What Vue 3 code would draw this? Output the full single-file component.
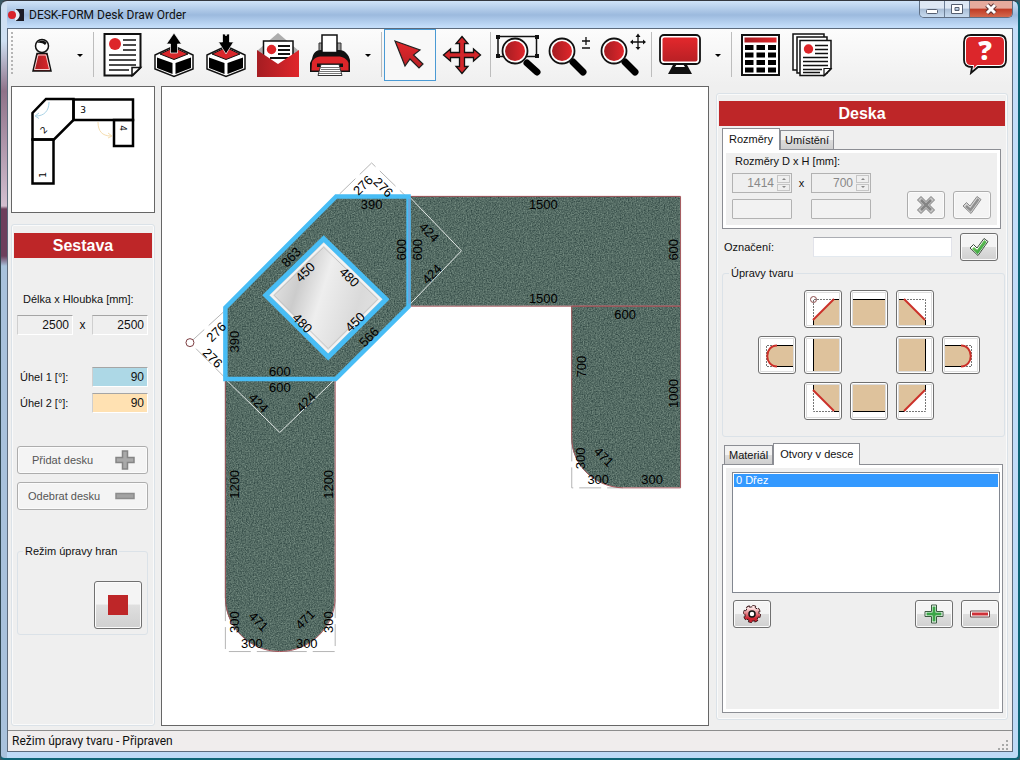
<script setup>
import { ref } from 'vue'

const activeTool = ref('select')
const label = ref('')
const angle1 = ref('90')
const angle2 = ref('90')
const deskTab = ref('size')
const partTab = ref('holes')
const holes = ['0 Dřez']
const selectedHole = ref(0)

// dimension labels: text, x, y, rotation
const dims = [
  ['276', 363, 185, -45], ['276', 384, 187, 45], ['390', 372, 204, 0],
  ['863', 291, 257, -45], ['450', 305, 272, -45], ['480', 350, 277, 45],
  ['480', 303, 323, 45], ['450', 355, 322, -45], ['566', 369, 337, -45],
  ['600', 401, 250, -90], ['600', 417, 250, -90], ['424', 430, 232, 45],
  ['424', 432, 274, -45], ['276', 216, 332, -45], ['276', 213, 358, 45],
  ['390', 234, 342, -90], ['600', 280, 371, 0], ['600', 280, 387, 0],
  ['424', 259, 403, 45], ['424', 306, 402, -45], ['1500', 544, 204, 0],
  ['1500', 544, 298, 0], ['600', 674, 250, -90], ['600', 626, 314, 0],
  ['700', 582, 367, -90], ['1000', 674, 394, -90], ['300', 581, 459, -90],
  ['471', 605, 457, 45], ['300', 599, 480, 0], ['300', 653, 480, 0],
  ['1200', 234, 485, -90], ['1200', 328, 485, -90], ['300', 234, 623, -90],
  ['300', 328, 623, -90], ['471', 259, 622, 45], ['471', 305, 620, -45],
  ['300', 252, 644, 0], ['300', 307, 644, 0]
]

// shape buttons in grid order, null = empty cell
const shapes = [
  null,
  { name: 'Levý horní roh', fill: 'M7 28 28 7H33V33H7Z', edge: 'M28 7.5H33M7.5 28V33', dash: 'M7.5 28V7.5H28', cut: 'M7 28 28 7', mark: true },
  { name: 'Horní hrana', fill: 'M1 7H33V33H1Z', edge: 'M1 7.5H33' },
  { name: 'Pravý horní roh', fill: 'M1 7H6L27 28V33H1Z', edge: 'M1 7.5H6M27.5 28V33', dash: 'M6 7.5H27.5V28', cut: 'M6 7 27 28' },
  null,
  { name: 'Levé zaoblení', fill: 'M33 7H16C4 7 4 28 16 28H33Z', edge: 'M15 7.5H33M15 28.5H33', dash: 'M15 7.5H6.5V28.5H15', cut: 'M17 7.5C4 7.5 4 28.5 17 28.5' },
  { name: 'Levá hrana', fill: 'M7 1H33V33H7Z', edge: 'M7.5 1V33' },
  null,
  { name: 'Pravá hrana', fill: 'M1 1H27V33H1Z', edge: 'M27.5 1V33' },
  { name: 'Pravé zaoblení', fill: 'M1 7H18C30 7 30 28 18 28H1Z', edge: 'M1 7.5H19M1 28.5H19', dash: 'M19 7.5H27.5V28.5H19', cut: 'M17 7.5C30 7.5 30 28.5 17 28.5' },
  null,
  { name: 'Levý dolní roh', fill: 'M7 1H33V27H28L7 6Z', edge: 'M7.5 1V6M28 27.5H33', dash: 'M7.5 6V27.5H28', cut: 'M7 6 28 27' },
  { name: 'Dolní hrana', fill: 'M1 1H33V27H1Z', edge: 'M1 27.5H33' },
  { name: 'Pravý dolní roh', fill: 'M1 1H27V6L6 27H1Z', edge: 'M27.5 1V6M1 27.5H6', dash: 'M27.5 6V27.5H6', cut: 'M27 6 6 27' },
  null
]
</script>

<template>
  <div class="window">
    <header class="titlebar">
      <svg class="app-icon" width="16" height="12" viewBox="0 0 16 12">
        <path d="M7 0H16V12H7C13 9 13 3 7 0Z" fill="#1c1c26" />
        <path d="M7 0C13 3 13 9 7 12Z" fill="#e6eef6" />
        <circle cx="4" cy="6" r="4" fill="#d8232a" />
      </svg>
      <h1>DESK-FORM Desk Draw Order</h1>
      <div class="win-buttons">
        <button aria-label="Minimalizovat">
          <svg width="14" height="12"><rect x="1.5" y="6.5" width="11" height="4" rx="1" fill="#fff" stroke="#555f70" /></svg>
        </button>
        <button aria-label="Maximalizovat">
          <svg width="14" height="12"><path d="M1.5 1.5H12.500V10.5H1.5ZM5 4.5V7.5H9V4.5Z" fill="#fff" fill-rule="evenodd" stroke="#555f70" /></svg>
        </button>
        <button class="win-close" aria-label="Zavřít">
          <svg width="14" height="12"><path d="M3 2 11 10M11 2 3 10" stroke="#5d3434" stroke-width="5" /><path d="M3 2 11 10M11 2 3 10" stroke="#fff" stroke-width="3" /></svg>
        </button>
      </div>
    </header>

    <div class="client">
      <svg class="defs" width="0" height="0">
        <defs>
          <linearGradient id="red" x1="0" y1="0" x2="1" y2="0">
            <stop offset="0" stop-color="#a51d22" /><stop offset="1" stop-color="#e0262b" />
          </linearGradient>
          <linearGradient id="redDown" x1="0" y1="0" x2="0" y2="1">
            <stop offset="0" stop-color="#e3282c" /><stop offset="1" stop-color="#b92025" />
          </linearGradient>
          <linearGradient id="green" x1="0" y1="0" x2="1" y2="1">
            <stop offset="0" stop-color="#8ed36a" /><stop offset="1" stop-color="#239b35" />
          </linearGradient>
          <linearGradient id="gearRed" x1="0" y1="0" x2="0" y2="1">
            <stop offset="0.1" stop-color="#ffe4e4" /><stop offset="0.8" stop-color="#cc2330" />
          </linearGradient>
          <linearGradient id="steel" x1="0" y1="0.2" x2="1" y2="0.5">
            <stop offset="0.1" stop-color="#e2e2e2" /><stop offset="0.3" stop-color="#cccccc" />
            <stop offset="0.5" stop-color="#eeeeee" /><stop offset="0.8" stop-color="#dadada" />
            <stop offset="1" stop-color="#e2e2e2" />
          </linearGradient>
          <filter id="stone" x="0" y="0" width="1" height="1" color-interpolation-filters="sRGB">
            <feTurbulence type="fractalNoise" baseFrequency="0.75" numOctaves="2" seed="4" />
            <feColorMatrix values="0.4 0 0 0 0.13  0.4 0 0 0 0.22  0.36 0 0 0 0.21  0 0 0 0 1" />
            <feComposite in2="SourceGraphic" operator="in" />
          </filter>
        </defs>
      </svg>

      <nav class="toolbar">
        <span class="grip"></span>
        <button class="tool" aria-label="Zákazník">
          <svg viewBox="0 0 52 52">
            <path d="M21 24.5H31L35 42H17Z" fill="url(#red)" stroke="#111" stroke-width="1.5" />
            <path d="M22 26H30L33.500 40.5H18.500Z" fill="none" stroke="#fff" stroke-width="0.8" />
            <circle cx="26" cy="17" r="6.5" fill="#fff" stroke="#111" stroke-width="1.5" />
            <path d="M21.5 14C23 10.5 29 10.5 30.5 14L29 16C27 14 24 13.5 21.5 14Z" fill="#111" />
          </svg>
        </button>
        <button class="drop" aria-label="Další možnosti zákazníka"></button>
        <span class="sep"></span>
        <button class="tool" aria-label="Objednávka">
          <svg viewBox="0 0 52 52">
            <path d="M8.5 5H44.5V38.5L36.5 46.5H8.5Z" fill="#fff" stroke="#111" stroke-width="2" />
            <path d="M36 46.5V38.5H44.5Z" fill="#fff" stroke="#111" stroke-width="1.5" />
            <circle cx="19" cy="15" r="6" fill="#dd2529" />
            <path d="M27 11H40M27 16H40M27 21H40M13 26H40M13 31H40M13 36H40M13 41H33" stroke="#111" stroke-width="1.7" />
          </svg>
        </button>
        <button class="tool" aria-label="Otevřít">
          <svg viewBox="0 0 52 52">
            <path d="M26 17 45 26V40L26 47.5 7 40V26Z" fill="#fff" stroke="#111" stroke-width="1.5" />
            <path d="M9 28.5 24.5 34V45L9 39ZM43 28.5 27.5 34V45L43 39Z" fill="#000" />
            <path d="M26 18.5 40 25 26 30.5 12 25Z" fill="#d8272b" stroke="#111" />
            <path d="M26 4 33.5 15H29.500V24H22.500V15H18.5Z" fill="#000" stroke="#fff" stroke-width="0.7" />
          </svg>
        </button>
        <button class="tool" aria-label="Uložit">
          <svg viewBox="0 0 52 52">
            <path d="M26 17 45 26V40L26 47.5 7 40V26Z" fill="#fff" stroke="#111" stroke-width="1.5" />
            <path d="M9 28.5 24.5 34V45L9 39ZM43 28.5 27.5 34V45L43 39Z" fill="#000" />
            <path d="M26 18.5 40 25 26 30.5 12 25Z" fill="#d8272b" stroke="#111" />
            <path d="M26 25 33.5 13H29.5V5H27L26 7 25 5H22.5V13H18.5Z" fill="#000" stroke="#fff" stroke-width="0.7" />
          </svg>
        </button>
        <button class="tool" aria-label="Odeslat e-mailem">
          <svg viewBox="0 0 52 52">
            <path d="M5 22 26 4 47 22V30H5Z" fill="#adadad" />
            <path d="M11.5 12H41V28L26 38 11.5 28Z" fill="#fff" stroke="#111" stroke-width="1.5" />
            <circle cx="19.5" cy="20.5" r="4.7" fill="#dd2529" />
            <path d="M26 17H38M26 21H38M26 25H38M18 29H37" stroke="#111" stroke-width="1.8" />
            <path d="M5 21 26 35 47 21V48H5Z" fill="url(#red)" />
          </svg>
        </button>
        <button class="tool" aria-label="Tisk">
          <svg viewBox="0 0 52 52">
            <path d="M15 14H37V24H15Z" fill="#999" stroke="#333" />
            <path d="M8 30C9 24 12 21 17 21H35C41 21 45 26 46 31V43H6V34Z" fill="#111" />
            <path d="M18 6H33V23.500H18Z" fill="#fff" stroke="#111" stroke-width="1.5" />
            <path d="M8 33C10 29 13 27.5 18 27.5H34C39 27.5 43 30 44.5 34V41.500H7.5Z" fill="#dd2529" />
            <path d="M13 34.500H39V38H13Z" fill="#111" />
            <path d="M17 35.500H35L38 46.5H14Z" fill="#fff" stroke="#333" />
            <path d="M17 38.5H35M17 40.5H36M16 42.5H36M15 44.5H37" stroke="#777" />
          </svg>
        </button>
        <button class="drop" aria-label="Možnosti tisku"></button>
        <span class="sep"></span>
        <button class="tool" :class="{ active: activeTool === 'select' }" aria-label="Výběr" @click="activeTool = 'select'">
          <svg viewBox="0 0 52 52">
            <path d="M11 12 36 21 29.5 26 39 35 35 39 26 30 21 37Z" fill="url(#redDown)" stroke="#222" stroke-width="1.2" />
          </svg>
        </button>
        <button class="tool" :class="{ active: activeTool === 'move' }" aria-label="Posun" @click="activeTool = 'move'">
          <svg viewBox="0 0 52 52">
            <path d="M26 7.5 32 14.5H28.5V23.5H37.5V20L44.5 26 37.5 32V28.5H28.5V37.5H32L26 44.5 20 37.5H23.5V28.5H14.5V32L7.5 26 14.5 20V23.5H23.5V14.5H20Z" fill="#d3262a" stroke="#111" stroke-width="1.3" />
          </svg>
        </button>
        <span class="sep"></span>
        <button class="tool" aria-label="Přiblížit výřez">
          <svg viewBox="0 0 52 52">
            <path d="M5 7.5H43.5V27.5H5Z" fill="none" stroke="#111" stroke-width="1.5" />
            <path d="M3 6H7V10H3ZM42 6H46V10H42ZM3 25H7V29H3ZM42 25H46V29H42Z" fill="#111" />
            <path d="M34 34 44 43" stroke="#000" stroke-width="7" stroke-linecap="round" />
            <circle cx="22" cy="22" r="12.5" fill="#fff" stroke="#111" stroke-width="1.8" />
            <circle cx="22" cy="22" r="10" fill="url(#red)" />
          </svg>
        </button>
        <button class="tool" aria-label="Měřítko">
          <svg viewBox="0 0 52 52">
            <path d="M28 33 38 43" stroke="#000" stroke-width="7" stroke-linecap="round" />
            <circle cx="17" cy="22" r="12.5" fill="#fff" stroke="#111" stroke-width="1.8" />
            <circle cx="17" cy="22" r="10" fill="url(#red)" />
            <path d="M37 12H45M41 8V16M37 19H45" stroke="#111" stroke-width="1.3" />
          </svg>
        </button>
        <button class="tool" aria-label="Posun pohledu">
          <svg viewBox="0 0 52 52">
            <path d="M28 33 38 43" stroke="#000" stroke-width="7" stroke-linecap="round" />
            <circle cx="17" cy="22" r="12.5" fill="#fff" stroke="#111" stroke-width="1.8" />
            <circle cx="17" cy="22" r="10" fill="url(#red)" />
            <path d="M34 13H48M41 6V20" stroke="#111" stroke-width="1.3" />
            <path d="M41 4.5 43.5 8H38.5ZM41 21 43.5 18H38.5ZM33 13 36 10.5V15.5ZM49 13 46 10.5V15.5Z" fill="#111" />
          </svg>
        </button>
        <span class="sep"></span>
        <button class="tool" aria-label="Zobrazení">
          <svg viewBox="0 0 52 52">
            <path d="M20 34H32L38 45H14Z" fill="#111" />
            <path d="M23 35H29L31 38H21Z" fill="#fff" />
            <rect x="6" y="6" width="40" height="29" rx="4" fill="#fff" stroke="#111" stroke-width="1.8" />
            <rect x="8.5" y="8.5" width="35" height="24" rx="2" fill="url(#redDown)" />
          </svg>
        </button>
        <button class="drop" aria-label="Možnosti zobrazení"></button>
        <span class="sep"></span>
        <button class="tool" aria-label="Kalkulace">
          <svg viewBox="0 0 52 52">
            <rect x="8" y="6" width="37" height="40" fill="#fff" stroke="#111" stroke-width="2" />
            <rect x="10.5" y="8.5" width="32" height="5" fill="url(#red)" />
            <path d="M11 18.5H42M11 26H42M11 33.5H42M11 41H42" stroke="#000" stroke-width="5" stroke-dasharray="8.5 3" />
          </svg>
        </button>
        <button class="tool" aria-label="Seznam objednávek">
          <svg viewBox="0 0 52 52">
            <path d="M7 5H38V41H7Z" fill="#fff" stroke="#111" stroke-width="1.5" />
            <path d="M11 8H41V44H11Z" fill="#fff" stroke="#111" stroke-width="1.5" />
            <path d="M14 11.5H45V40L38.5 46.5H14Z" fill="#fff" stroke="#111" stroke-width="1.5" />
            <path d="M38 46.5V39.5H45Z" fill="#fff" stroke="#111" stroke-width="1.2" />
            <circle cx="22.5" cy="20" r="4.7" fill="#dd2529" />
            <path d="M29 16.5H42M29 20.5H42M29 24.5H42M17 28.5H42M17 32.5H42M17 36.5H42M17 40.5H36M17 43.5H34" stroke="#111" stroke-width="1.3" />
          </svg>
        </button>
        <button class="tool help" aria-label="Nápověda">
          <svg viewBox="0 0 52 52">
            <path d="M12 6H40Q47 6 47 13V31Q47 38 40 38H19L12 44 13 38Q5 38 5 31V13Q5 6 12 6Z" fill="#fff" stroke="#111" stroke-width="1.8" />
            <path d="M12 8H40Q45 8 45 13V31Q45 36 40 36H18L14.5 39.5 15 36H12Q7 36 7 31V13Q7 8 12 8Z" fill="#dc262b" />
            <text x="26" y="31" class="help-mark">?</text>
          </svg>
        </button>
      </nav>

      <main class="main">
        <aside class="left">
          <div class="preview">
            <svg viewBox="0 0 142 125">
              <g fill="none" stroke="#000" stroke-width="2.5">
                <path d="M34 12H61.500V33L42 52.5H20.5V26Z" />
                <path d="M61.5 12.5H121V33H61.5Z" />
                <path d="M20.5 52.5H41.500V96.5H20.5Z" />
                <path d="M102 33H121V59H102Z" />
              </g>
              <path d="M37 15C37 24 32 29 24 29M27 26 23 29 27 31.5" fill="none" stroke="#a9d3e6" />
              <path d="M86 35C86 44 90 49 99 49M96 46 100 49 96 51" fill="none" stroke="#f6deb0" />
              <g class="preview-num">
                <text x="71" y="26">3</text>
                <text transform="translate(32 43) rotate(-45)" y="3">2</text>
                <text transform="translate(31 88) rotate(-90)" y="3">1</text>
                <text transform="translate(111 41) rotate(90)" y="3">4</text>
              </g>
            </svg>
          </div>

          <section class="group assembly">
            <h2>Sestava</h2>
            <div class="assembly-body">
              <label for="len" class="size-label">Délka x Hloubka [mm]:</label>
              <div class="size-row">
                <input id="len" class="sunken" value="2500" readonly />
                <span>x</span>
                <input class="sunken" value="2500" readonly aria-label="Hloubka" />
              </div>
              <div class="angle-row">
                <label for="a1">Úhel 1 [°]:</label>
                <input id="a1" v-model="angle1" class="sunken blue" />
              </div>
              <div class="angle-row">
                <label for="a2">Úhel 2 [°]:</label>
                <input id="a2" v-model="angle2" class="sunken sand" />
              </div>
              <button class="btn wide" disabled>
                <span>Přidat desku</span>
                <svg width="20" height="20"><path d="M7.5 1H12.5V7.5H19V12.5H12.5V19H7.5V12.5H1V7.5H7.5Z" fill="#a9a9a9" stroke="#858585" stroke-width="1.5" /></svg>
              </button>
              <button class="btn wide" disabled>
                <span>Odebrat desku</span>
                <svg width="20" height="20"><path d="M1 7.5H19V12.5H1Z" fill="#a2a2a2" stroke="#8c8c8c" stroke-width="1.5" /></svg>
              </button>
              <fieldset class="edges">
                <legend>Režim úpravy hran</legend>
                <button class="btn square" aria-label="Režim úpravy hran"><span class="stop"></span></button>
              </fieldset>
            </div>
          </section>
        </aside>

        <div class="canvas">
          <svg viewBox="162 87 547 639">
            <g fill="none" stroke="#b5b5b5" stroke-dasharray="22 6">
              <path d="M340 194 372 163 406 196" />
              <path d="M225 311 190 343 225 378" />
              <path d="M225.5 600V652.5H335.5V600M572.5 440V488.5H624" />
            </g>
            <g filter="url(#stone)">
              <path d="M410 196H681V306H410Z" />
              <path d="M572 306H681V488H624C596 488 572 466 572 438Z" />
              <path d="M225 380H335V598C335 628 310 652 280 652S225 628 225 598Z" />
              <path d="M336 196H409V307L336 380H225V308Z" />
            </g>
            <g fill="none" stroke="#a2555a">
              <path d="M410.5 196.5H681.5V306.5H410.5Z" />
              <path d="M572.5 306.5H681.5V488.5H624C596 488 572.5 466 572.5 438Z" />
              <path d="M335.5 380V598C335.5 628 310 652.5 280 652.5S225.5 628 225.5 598V380" />
            </g>
            <path d="M410 197 462 251 410 305M227 381 280 433 334 381" fill="none" stroke="#e4e9e7" />
            <path d="M336.5 196.5H409V307L336 379.5H225.5V308Z" fill="none" stroke="#48bdf5" stroke-width="4.5" />
            <path d="M409.5 199V304" stroke="#8f8fc0" />
            <path d="M324 239 386.5 299.5 328.5 357.5 266 295.5Z" fill="url(#steel)" stroke="#48bdf5" stroke-width="5" />
            <path d="M324 244.5 381 299.5 328.5 352 271.5 295.5Z" fill="none" stroke="#f4f4f4" stroke-width="2" />
            <path d="M324 247.5 378 299.5 328.5 349 274.5 295.5Z" fill="none" stroke="#c4c4c4" />
            <circle cx="190" cy="343" r="4" fill="#fff" stroke="#7a3a3e" />
            <g class="dims">
              <text v-for="(d, i) in dims" :key="i" :transform="`translate(${d[1]} ${d[2]}) rotate(${d[3]})`" y="5">{{ d[0] }}</text>
            </g>
          </svg>
        </div>

        <aside class="group right">
          <h2>Deska</h2>

          <div class="tabs first">
            <div class="tab-row" role="tablist">
              <button role="tab" class="tab" :class="{ on: deskTab === 'size' }" @click="deskTab = 'size'">Rozměry</button>
              <button role="tab" class="tab" :class="{ on: deskTab === 'place' }" @click="deskTab = 'place'">Umístění</button>
            </div>
            <div class="pane size-pane">
              <label for="dw">Rozměry D x H [mm]:</label>
              <div class="dim-grid">
                <div class="spin"><input id="dw" value="1414" disabled /><span class="arrows"><i></i><i class="down"></i></span></div>
                <span class="times">x</span>
                <div class="spin"><input value="700" disabled aria-label="Hloubka desky" /><span class="arrows"><i></i><i class="down"></i></span></div>
                <input class="flat" disabled aria-label="Výraz délky" />
                <span></span>
                <input class="flat" disabled aria-label="Výraz hloubky" />
              </div>
              <div class="pane-actions">
                <button class="btn small" disabled aria-label="Zrušit">
                  <svg width="20" height="20" viewBox="0 0 20 20"><path d="M5 1.5 10 6.5 15 1.5 18.5 5 13.5 10 18.5 15 15 18.5 10 13.5 5 18.5 1.5 15 6.5 10 1.5 5Z" fill="#c4c4c4" stroke="#7c7c7c" /><path d="M5 5 15 15M15 5 5 15" stroke="#858585" stroke-width="2.5" /></svg>
                </button>
                <button class="btn small" disabled aria-label="Použít">
                  <svg width="20" height="20" viewBox="0 0 20 20"><path d="M1 11 4.5 7.5 8 11 15 1.5 19 4.5 9 18.5Z" fill="#d5d5d5" stroke="#8a8a8a" /><path d="M4 11 8.5 15 16.5 4" fill="none" stroke="#909090" stroke-width="2.5" /></svg>
                </button>
              </div>
            </div>
          </div>

          <div class="mark-row">
            <label for="mark">Označení:</label>
            <input id="mark" v-model="label" />
            <button class="btn small" aria-label="Potvrdit označení">
              <svg width="20" height="20" viewBox="0 0 20 20"><path d="M1 11 4.5 7.5 8 11 15 1.5 19 4.5 9 18.5Z" fill="#fff" stroke="#3b4b3b" /><path d="M4 11 8.5 15 16.5 4" fill="none" stroke="url(#green)" stroke-width="3" /></svg>
            </button>
          </div>

          <fieldset class="shape-box">
            <legend>Úpravy tvaru</legend>
            <div class="shape-grid">
              <template v-for="(s, i) in shapes" :key="i">
                <span v-if="!s"></span>
                <button v-else class="shape-btn" :aria-label="s.name">
                  <svg viewBox="0 0 34 34">
                    <path :d="s.fill" fill="#dec29c" />
                    <path v-if="s.dash" :d="s.dash" fill="none" stroke="#777" stroke-dasharray="2 1" />
                    <path :d="s.edge" fill="none" stroke="#000" />
                    <path v-if="s.cut" :d="s.cut" fill="none" stroke="#cb3029" stroke-width="2" />
                    <circle v-if="s.mark" cx="7.5" cy="7.5" r="3" fill="none" stroke="#8b4a4a" />
                  </svg>
                </button>
              </template>
            </div>
          </fieldset>

          <div class="tabs second">
            <div class="tab-row" role="tablist">
              <button role="tab" class="tab" :class="{ on: partTab === 'material' }" @click="partTab = 'material'">Materiál</button>
              <button role="tab" class="tab" :class="{ on: partTab === 'holes' }" @click="partTab = 'holes'">Otvory v desce</button>
            </div>
            <div class="pane holes-pane">
              <ul class="listbox" role="listbox" aria-label="Otvory v desce">
                <li v-for="(h, i) in holes" :key="h" role="option" :class="{ selected: selectedHole === i }" :aria-selected="selectedHole === i" @click="selectedHole = i">{{ h }}</li>
              </ul>
              <div class="hole-actions">
                <button class="btn small" aria-label="Nastavení otvoru">
                  <svg width="20" height="20" viewBox="0 0 20 20">
                    <circle cx="10" cy="10" r="7.5" fill="none" stroke="#3a1518" stroke-width="3" stroke-dasharray="3.5 2.39" />
                    <circle cx="10" cy="10" r="7.2" fill="url(#gearRed)" stroke="#3a1518" />
                    <circle cx="10" cy="10" r="7.2" fill="none" stroke="url(#gearRed)" stroke-width="2" stroke-dasharray="2.7 2.955" />
                    <circle cx="10" cy="10" r="3" fill="#fff" stroke="#111" stroke-width="1.5" />
                  </svg>
                </button>
                <span class="fill"></span>
                <button class="btn small" aria-label="Přidat otvor">
                  <svg width="20" height="20"><path d="M7.5 1H12.5V7.5H19V12.5H12.5V19H7.5V12.5H1V7.5H7.5Z" fill="#fff" stroke="#3b5b40" /><path d="M10 2.500V17.500M2.500 10H17.500" stroke="#3ba648" stroke-width="3" /></svg>
                </button>
                <button class="btn small" aria-label="Odebrat otvor">
                  <svg width="20" height="20"><path d="M.5 7H19.5V13H.5Z" fill="#fff" stroke="#6b4b4b" /><path d="M2 10H18" stroke="#cf3037" stroke-width="3" /></svg>
                </button>
              </div>
            </div>
          </div>
        </aside>
      </main>

      <footer class="status">
        <span>Režim úpravy tvaru - Připraven</span>
        <svg width="12" height="12"><path d="M8 1h2v2h-2zM4 5h2v2h-2zM8 5h2v2h-2zM0 9h2v2h-2zM4 9h2v2h-2zM8 9h2v2h-2z" fill="#a8a8a8" /></svg>
      </footer>
    </div>
  </div>
</template>

<style>
body {
  background: #3b5a66;
}
</style>

<style scoped>
* {
  box-sizing: border-box;
}

.window {
  min-height: 100vh;
  display: flex;
  flex-direction: column;
  padding: 0 5px 6px 6px;
  border: 1px solid #2f4650;
  border-top-color: #33373f;
  border-right: 2px solid #0e6577;
  border-bottom: 2px solid #0e6577;
  border-radius: 7px 7px 5px 5px;
  background:
    linear-gradient(#cfe0f2 40px, #8f7289 90px, #d3bfd0 205px, #6d3f5c 208px, #6d3f5c 255px, #a9c2dc 265px) left / 6px 100% no-repeat,
    linear-gradient(#cfe3f8, #9cbade 14px, #c4defa 26px, #bddaf7);
  font-family: "Liberation Sans", Arial, sans-serif;
  font-size: 11px;
  line-height: 13px;
  color: #111;
}

button,
input {
  font: inherit;
  color: inherit;
  margin: 0;
}

button {
  padding: 0;
}

/* title bar */
.titlebar {
  height: 27px;
  display: flex;
  align-items: center;
  gap: 5px;
  padding-left: 1px;
}

.titlebar h1 {
  flex: 1;
  margin: 0;
  font-family: Roboto, "Open Sans", sans-serif;
  font-size: 12px;
  line-height: 16px;
  font-weight: 400;
}

.win-buttons {
  display: flex;
  align-self: flex-start;
  border: 1px solid #5f6f84;
  border-top: none;
  border-radius: 0 0 5px 5px;
  overflow: hidden;
}

.win-buttons button {
  width: 25px;
  height: 16px;
  border: none;
  border-right: 1px solid #6d7f96;
  background: linear-gradient(#dde8f4 45%, #a8bdd5 50%, #c8dbef);
  display: grid;
  place-items: center;
}

.win-buttons .win-close {
  width: 42px;
  border-right: none;
  background: linear-gradient(#e6aa9c 45%, #bf3a24 50%, #d4694e);
}

/* client area */
.client {
  flex: 1;
  display: flex;
  flex-direction: column;
  border: 1px solid #5d6b7c;
  background: #efefef;
}

.defs {
  position: absolute;
}

.toolbar {
  height: 57px;
  display: flex;
  align-items: flex-start;
  padding: 0 1px 0 2px;
  background: linear-gradient(#fcfcfc, #efefef);
}

.grip {
  width: 6px;
  height: 43px;
  margin-top: 3px;
  background: repeating-linear-gradient(#b5b5b5 0 2px, transparent 2px 4px) 1px 0 / 2px 100% no-repeat;
}

.tool {
  width: 52px;
  height: 52px;
  border: 1px solid transparent;
  background: none;
}

.tool svg {
  display: block;
  width: 52px;
  height: 52px;
  margin: -1px;
}

.tool.active {
  border-color: #4a9ad4;
  background: #f8f8f8;
}

.help {
  margin-left: auto;
}

.help-mark {
  font: 800 27px "Open Sans", sans-serif;
  fill: #fff;
  text-anchor: middle;
}

.drop {
  width: 23px;
  height: 52px;
  border: none;
  background: none;
  display: grid;
  place-items: center;
}

.drop::after {
  content: "";
  border: 3px solid transparent;
  border-top-color: #000;
  border-bottom: none;
}

.sep {
  width: 5px;
  height: 45px;
  margin-top: 3px;
  background: linear-gradient(#bdbdbd, #bdbdbd) 2px 0 / 1px 100% no-repeat;
}

/* main columns */
.main {
  flex: 1;
  display: flex;
  gap: 6px;
  padding: 0 4px 4px 3px;
}

.left {
  width: 144px;
  display: flex;
  flex-direction: column;
  gap: 11px;
}

.preview,
.canvas {
  background: #fff;
  border: 1px solid #666;
}

.preview svg {
  display: block;
  width: 100%;
}

.preview-num {
  font: 9px "DejaVu Sans", sans-serif;
  text-anchor: middle;
}

.group {
  border: 1px solid #dbe2e8;
  border-radius: 3px;
  box-shadow: inset 0 0 0 1px #fafafa;
}

h2 {
  margin: 0;
  background: #be2628;
  color: #fff;
  font-size: 16px;
  line-height: 25px;
  font-weight: 700;
  text-align: center;
}

.assembly {
  flex: 1;
  padding: 8px 2px;
}

.assembly-body {
  display: flex;
  flex-direction: column;
  padding: 35px 4px 0 3px;
}

.size-label {
  padding-left: 6px;
}

.size-row {
  display: flex;
  align-items: center;
  justify-content: space-between;
  margin: 9px 0 32px;
  font-size: 12px;
}

.sunken {
  width: 56px;
  height: 20px;
  padding: 0 3px 0 0;
  border: 1px solid;
  border-color: #a5a5a5 #fff #fff #cfcfcf;
  background: #efefef;
  font-size: 12px;
  text-align: right;
}

.angle-row {
  display: flex;
  align-items: center;
  justify-content: space-between;
  padding-left: 3px;
  margin-bottom: 6px;
}

.angle-row + .angle-row {
  margin-bottom: 33px;
}

.sunken.blue {
  background: #add8e6;
}

.sunken.sand {
  background: #ffe1b2;
}

.btn {
  border: 1px solid #707070;
  border-radius: 3px;
  background: linear-gradient(#f4f4f4 48%, #dfdfdf 50%, #d0d0d0);
  box-shadow: inset 0 0 0 1px #fbfbfb;
  display: flex;
  align-items: center;
  justify-content: center;
}

.btn:disabled {
  border-color: #adadad;
  background: #f4f4f4;
  color: #555;
}

.wide {
  height: 28px;
  margin-bottom: 8px;
  padding: 0 12px 0 10px;
  justify-content: space-between;
}

.wide:first-of-type span {
  padding-left: 4px;
}

fieldset {
  margin: 0;
  min-width: 0;
  border: 1px solid #dbe2e8;
  border-radius: 3px;
}

legend {
  padding: 0 2px;
}

.edges {
  margin-top: 27px;
  padding: 23px 5px 5px;
  display: flex;
  justify-content: flex-end;
}

.square {
  width: 48px;
  height: 48px;
}

.stop {
  width: 20px;
  height: 20px;
  background: #be2628;
}

.canvas {
  flex: 1;
  min-width: 0;
}

.canvas svg {
  display: block;
  width: 100%;
  height: 100%;
}

.dims {
  font: 13px "Liberation Sans", Arial, sans-serif;
  fill: #000;
  text-anchor: middle;
}

/* right panel */
.right {
  width: 292px;
  margin: 7px 0 6px 1px;
  padding: 7px 2px 6px;
  display: flex;
  flex-direction: column;
}

.tabs {
  display: flex;
  flex-direction: column;
}

.tab-row {
  display: flex;
  align-items: flex-end;
}

.tab {
  height: 19px;
  padding: 0 4px;
  border: 1px solid #8c8e94;
  border-bottom: none;
  background: linear-gradient(#f2f2f2 50%, #dcdcdc 52%, #cfcfcf);
}

.tab.on {
  position: relative;
  height: 22px;
  padding: 0 6px;
  margin-bottom: -1px;
  background: #fff;
}

.pane {
  border: 1px solid #8c8e94;
  box-shadow: inset 0 0 0 3px #fff;
}

.first {
  margin: 2px 4px 0 3px;
}

.size-pane {
  display: grid;
  grid-template-columns: auto 1fr;
  padding: 5px 9px 9px;
}

.size-pane label {
  grid-column: 1 / 3;
  padding-left: 3px;
}

.dim-grid {
  display: grid;
  grid-template-columns: 60px 19px 60px;
  gap: 6px 0;
  margin-top: 5px;
}

.times {
  text-align: center;
  line-height: 20px;
}

.spin {
  height: 20px;
  display: flex;
  border: 1px solid #b2b2b2;
  padding: 1px;
}

.spin input {
  flex: 1;
  min-width: 0;
  border: none;
  padding: 0 3px 0 0;
  background: none;
  color: #888;
  font-size: 12px;
  text-align: right;
}

.arrows {
  width: 13px;
  display: flex;
  flex-direction: column;
  gap: 1px;
}

.arrows i {
  flex: 1;
  border: 1px solid #c6c6c6;
  display: grid;
  place-items: center;
}

.arrows i::after {
  content: "";
  border: 2px solid transparent;
  border-top: none;
  border-bottom-color: #888;
}

.arrows .down::after {
  border-top: 2px solid #888;
  border-bottom: none;
}

.flat {
  width: 60px;
  height: 20px;
  border: 1px solid #b2b2b2;
  border-radius: 1px;
  background: #f2f2f2;
}

.pane-actions {
  display: flex;
  gap: 8px;
  align-items: flex-end;
  justify-content: flex-end;
}

.small {
  width: 38px;
  height: 28px;
}

.mark-row {
  display: flex;
  align-items: center;
  gap: 8px;
  margin: 4px 7px 0 5px;
}

.mark-row label {
  flex: 1;
}

.mark-row input {
  width: 139px;
  height: 20px;
  border: 1px solid;
  border-color: #abadb3 #e2e3ea #e3e9ef #e2e3ea;
  background: #fff;
}

.shape-box {
  margin: 6px 0 0 3px;
  padding: 10px 0 16px;
}

.shape-box legend {
  margin-left: 6px;
}

.shape-grid {
  display: grid;
  grid-template-columns: repeat(5, 38px);
  justify-content: center;
  gap: 8px;
  padding-left: 10px;
}

.shape-btn {
  height: 38px;
  border: 1px solid #707070;
  border-radius: 3px;
  background: #fff;
  box-shadow: inset 0 0 0 1px #fff, inset 0 0 0 2px #ddd;
  padding: 1px;
}

.shape-btn svg {
  display: block;
  width: 34px;
  height: 34px;
}

.second {
  flex: 1;
  margin: 6px 2px 0 3px;
}

.second .tab:first-child {
  margin-left: 2px;
}

.holes-pane {
  flex: 1;
  padding: 7px 2px 8px 9px;
}

.listbox {
  height: 121px;
  margin: 0;
  padding: 1px;
  list-style: none;
  background: #fff;
  border: 1px solid #828790;
}

.listbox li {
  padding: 0 2px;
}

.listbox .selected {
  background: #3399ff;
  color: #fff;
}

.hole-actions {
  display: flex;
  gap: 8px;
  padding: 7px 1px 0;
}

.fill {
  flex: 1;
}

/* status bar */
.status {
  height: 21px;
  display: flex;
  align-items: center;
  justify-content: space-between;
  padding: 0 2px 0 4px;
  border-top: 1px solid #8d8d8d;
  background: #f0eded;
  font-family: Roboto, "Open Sans", sans-serif;
  font-size: 12px;
}

.status svg {
  align-self: flex-end;
}
</style>
